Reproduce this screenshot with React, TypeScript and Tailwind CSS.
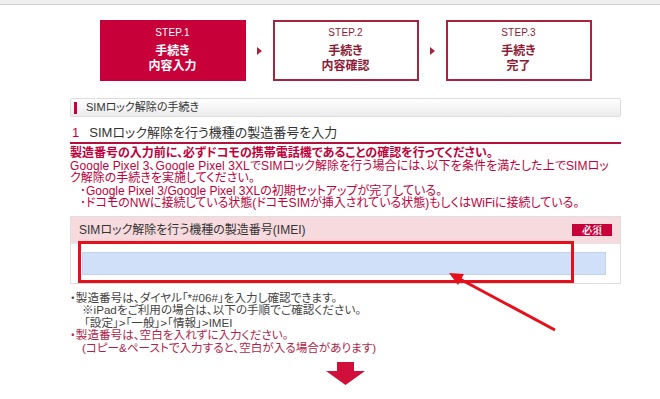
import React from 'react';

const font = { fontFamily: '"Liberation Sans", "Noto Sans CJK JP", sans-serif' };

const Step: React.FC<{ n: number; lines: string[]; active?: boolean }> = ({ n, lines, active }) => (
  <div
    className={
      'w-[146px] h-[61px] flex flex-col items-center justify-center ' +
      (active ? 'bg-[#c8003a] text-white' : 'border-2 border-[#a8233f] text-[#8e1b36] bg-white')
    }
  >
    <div className="text-[10px] leading-[12px] mb-[5px] tracking-wide">STEP.{n}</div>
    {lines.map((l) => (
      <div key={l} className="text-[12px] leading-[15px] font-bold">
        {l}
      </div>
    ))}
  </div>
);

const Tri: React.FC = () => (
  <div className="w-[27px] flex justify-center">
    <div className="w-0 h-0 border-y-[4px] border-y-transparent border-l-[5px] border-l-[#a8233f]" />
  </div>
);

export default function App() {
  return (
    <div className="relative w-[660px] h-[399px] overflow-hidden bg-white [font-feature-settings:'palt']" style={font}>
      <div className="h-[5px] bg-[#efefef] border-b border-[#cfcfcf]" />

      <div className="ml-[70px] w-[551px]">
        {/* steps */}
        <div className="mt-[15px] flex items-center justify-center">
          <Step n={1} lines={['手続き', '内容入力']} active />
          <Tri />
          <Step n={2} lines={['手続き', '内容確認']} />
          <Tri />
          <Step n={3} lines={['手続き', '完了']} />
        </div>

        {/* section header */}
        <div className="mt-[17px] h-[19px] flex items-center border border-[#dcdcdc] rounded-[2px] bg-gradient-to-b from-white to-[#ececec]">
          <div className="ml-[3px] w-[3px] h-[12px] bg-[#c8003a]" />
          <span className="ml-[9px] text-[11px] text-[#333]">SIMロック解除の手続き</span>
        </div>

        {/* heading */}
        <div className="mt-[6px] h-[21px] flex items-center border-b-2 border-[#b4123c]">
          <span className="ml-[2px] text-[13px] text-[#c8003a]">1</span>
          <span className="ml-[10px] text-[13px] text-[#333]">SIMロック解除を行う機種の製造番号を入力</span>
        </div>

        {/* red text */}
        <div className="mt-[3px] text-[#c0003a] text-[12px] leading-[12.6px] whitespace-nowrap">
          <div className="font-bold">製造番号の入力前に、必ずドコモの携帯電話機であることの確認を行ってください。</div>
          <div className="tracking-[0.1px]">Google Pixel 3、Google Pixel 3XLでSIMロック解除を行う場合には、以下を条件を満たした上でSIMロッ</div>
          <div>ク解除の手続きを実施してください。</div>
          <div className="pl-[10px]">･Google Pixel 3/Google Pixel 3XLの初期セットアップが完了している。</div>
          <div className="pl-[10px]">･ドコモのNWに接続している状態(ドコモSIMが挿入されている状態)もしくはWiFiに接続している。</div>
        </div>

        {/* form */}
        <div className="relative mt-[6px] border border-[#dedede]">
          <div className="h-[27px] bg-[#f7dadd] flex items-center justify-between px-[8px] border-b border-[#e6e6e6]">
            <span className="text-[12px] text-[#333]">SIMロック解除を行う機種の製造番号(IMEI)</span>
            <span className="w-[40px] h-[12px] bg-[#c8003a] text-white text-[10px] leading-[12px] text-center font-bold" style={{ fontFamily: '"Noto Serif CJK JP", "Liberation Serif", serif' }}>
              必須
            </span>
          </div>
          <div className="h-[39px] flex items-center px-[11px]">
            <div className="h-[23px] w-[524px] bg-[#cfe0f8] border border-[#c3d3e6]" />
          </div>
          <div className="absolute left-[7px] top-[24px] w-[496px] h-[42px] border-[3px] border-[#e5101c]" />
        </div>

        {/* notes */}
        <div className="mt-[8px] text-[11.6px] leading-[12.5px] text-[#444] whitespace-nowrap">
          <div>・製造番号は、ダイヤル「*#06#」を入力し確認できます。</div>
          <div className="pl-[12px]">※iPadをご利用の場合は、以下の手順でご確認ください。</div>
          <div className="pl-[14px]">「設定」&gt;「一般」&gt;「情報」&gt;IMEI</div>
          <div className="text-[#b01e4a]">・製造番号は、空白を入れずに入力ください。</div>
          <div className="pl-[12px] text-[#b01e4a]">(コピー&amp;ペーストで入力すると、空白が入る場合があります)</div>
        </div>

        {/* down arrow */}
        <div className="mt-[8px] flex justify-center">
          <svg width="39" height="23" viewBox="0 0 39 23">
            <polygon points="11,0 28,0 28,9 39,9 19.5,23 0,9 11,9" fill="#d0103a" />
          </svg>
        </div>
      </div>

      {/* annotation arrow */}
      <svg className="absolute left-0 top-0 pointer-events-none" width="660" height="399">
        <line x1="458" y1="278" x2="555" y2="330" stroke="#e5101c" strokeWidth="3" />
        <polygon points="449,273 464,274 458,285" fill="#e5101c" />
      </svg>
    </div>
  );
}
